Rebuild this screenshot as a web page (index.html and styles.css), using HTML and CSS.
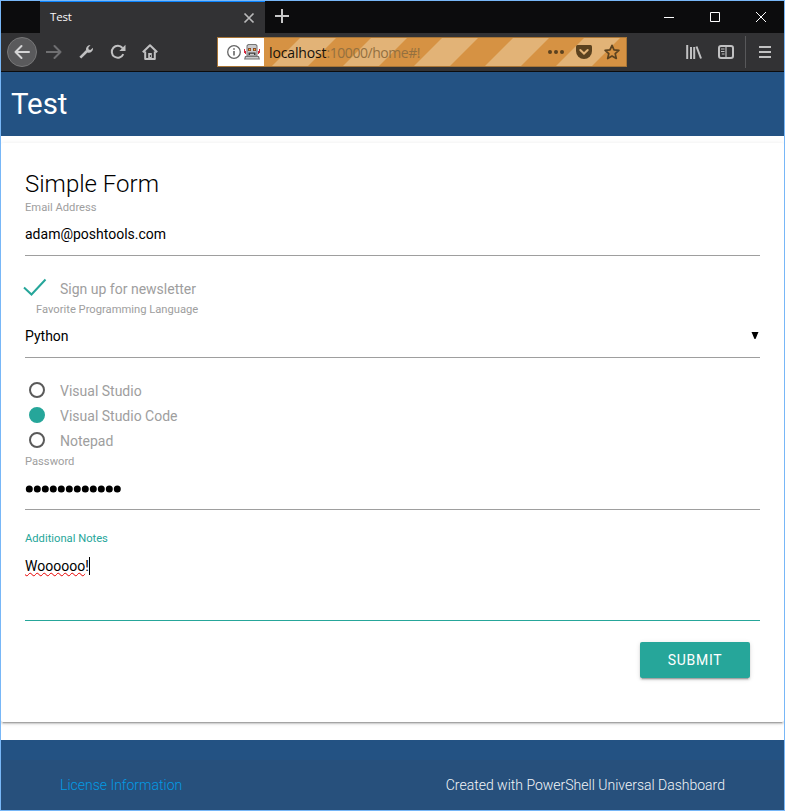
FILE: index.html
```html
<!DOCTYPE html>
<html lang="en">
<head>
<meta charset="utf-8">
<title>Test</title>
<link rel="stylesheet" href="styles.css">
</head>
<body>
<div class="window">
  <div class="tabbar">
    <div class="tab">
      <span class="tab-title">Test</span>
      <svg class="tab-close" width="12" height="12" viewBox="0 0 12 12"><path d="M1.5 1.5l9 9M10.5 1.5l-9 9"/></svg>
    </div>
    <svg class="tab-new" width="14" height="14" viewBox="0 0 14 14"><path d="M7 0v14M0 7h14"/></svg>
    <div class="controls">
      <svg width="10" height="11" viewBox="0 0 10 11"><path d="M0 5.5h10"/></svg>
      <svg width="10" height="10" viewBox="0 0 10 10"><path d="M.5.5h9v9h-9z"/></svg>
      <svg width="10" height="10" viewBox="0 0 10 10"><path d="M0 0l10 10M10 0L0 10"/></svg>
    </div>
  </div>
  <div class="toolbar">
    <div class="back"><svg width="16" height="16" viewBox="0 0 16 16"><path d="M15 8H1.5M7.5 2l-6 6 6 6"/></svg></div>
    <svg class="tool forward" width="16" height="16" viewBox="0 0 16 16"><path d="M0 8h14.5M8.500 2l6 6-6 6"/></svg>
    <svg class="tool" width="16" height="16" viewBox="0 0 16 16"><path d="M2.300 13.700L9 7" stroke-width="2.600"/><path class="solid" d="M12.500 1a4.400 4.400 0 0 0-4.200 6.200l1.600 1.500A4.300 4.300 0 0 0 15 3.800l-2.600 2.100-1.700-.3-.4-1.900z"/></svg>
    <svg class="tool" width="16" height="16" viewBox="0 0 16 16"><path d="M13.300 10.200A6 6 0 1 1 12.500 4" /><path class="solid" d="M15.500 .8v6.200H9.300z"/></svg>
    <svg class="tool" width="16" height="16" viewBox="0 0 16 16"><path d="M.8 8.300L8 1.200l7.200 7.100M3.200 7.500V15h9.600V7.500"/><path class="solid" d="M6.200 9h3.600v6H6.200z"/><path d="M8.400 11v2" stroke="#323234" stroke-width="1"/></svg>
    <div class="urlbar">
      <div class="identity">
        <svg width="14" height="14" viewBox="0 0 14 14" fill="none" stroke="#656565"><circle cx="7" cy="7" r="6.300" stroke-width="1.300"/><path d="M7 6v4.500M7 3.200v1.600" stroke-width="1.600"/></svg>
        <svg width="16" height="16" viewBox="0 0 16 16"><path fill="#d7263d" d="M0 5h1v2h1v3H1V9H0zM16 5h-1v2h-1v3h1V9h1z"/><path fill="#777" d="M4 0h8l1.500 1.500V12H15l1 3.500H0L1 12h1.500V1.500z"/><path fill="#c9cacc" d="M4.500 1h7l1 1.200V11.500h-9V2.200zM2 13h12l.5 1.500h-13z"/><path fill="#8a4a2a" d="M4 4h3v3H4zM9 4h3v3H9z"/><path fill="#ffb52e" d="M5 5h1.200v1.200H5zM10 5h1.200v1.200H10z"/><path fill="#3c3c3c" d="M4.500 8.500h7V11H10V9.700H6V11H4.500z"/></svg>
      </div>
      <div class="address">
        <svg class="stripes" width="363" height="28" viewBox="0 0 363 28"><path d="M8 28L36 0h36L44 28zM79 28L107 0h36L115 28zM150 28L178 0h36L186 28zM221 28L249 0h36L257 28zM292 28L320 0h36L328 28z"/></svg>
        <span class="url"><span class="host">localhost</span>:10000/home#!</span>
        <div class="actions">
          <svg width="16" height="16" viewBox="0 0 16 16"><circle cx="2" cy="8" r="2"/><circle cx="8" cy="8" r="2"/><circle cx="14" cy="8" r="2"/></svg>
          <svg width="16" height="16" viewBox="0 0 16 16"><path d="M1.500 1h13Q16 1 16 2.500V7A8 8 0 0 1 0 7V2.500Q0 1 1.500 1z"/><path d="M4.300 6L8 9.500 11.700 6" fill="none" stroke="#e2b377" stroke-width="2" stroke-linecap="round"/></svg>
          <svg width="16" height="16" viewBox="0 0 16 16"><path d="M8 1.300l2 4.500 4.900.5-3.700 3.300 1.100 4.900L8 12l-4.300 2.500 1.100-4.900L1.100 6.300 6 5.800z" fill="none" stroke="#5b421f" stroke-width="1.700" stroke-linejoin="round"/></svg>
        </div>
      </div>
    </div>
    <div class="tools-right">
      <svg class="tool" width="16" height="16" viewBox="0 0 16 16"><path d="M1.200 1v14M5 3v12M8.200 3v12M10.500 2.500L15 14.500"/></svg>
      <svg class="tool" width="16" height="16" viewBox="0 0 16 16"><rect x="1" y="2" width="14" height="12" rx="2"/><path d="M8 2v12M3 5h3.500M3 7.500h3.500M3.800 10h2.700" stroke-width="1.200"/></svg>
      <i class="divider"></i>
      <svg class="tool" width="12" height="12" viewBox="0 0 12 12"><path d="M0 1h12M0 6h12M0 11h12"/></svg>
    </div>
  </div>
  <header class="page-header">Test</header>
  <main class="page">
    <form class="card">
      <h1 class="card-title">Simple Form</h1>
      <label class="label">Email Address</label>
      <div class="field">adam@poshtools.com</div>
      <div class="option">
        <svg class="check" width="24" height="20" viewBox="0 0 24 20"><path d="M1 9.500L8.500 16.500 22.500 1.500"/></svg>
        <span>Sign up for newsletter</span>
      </div>
      <label class="label label-select">Favorite Programming Language</label>
      <div class="field select"><span>Python</span><svg width="8" height="8" viewBox="0 0 8 8"><path d="M.5 0h7L4.500 7h-1z"/></svg></div>
      <div class="option"><i class="radio"></i><span>Visual Studio</span></div>
      <div class="option stacked"><i class="radio selected"></i><span>Visual Studio Code</span></div>
      <div class="option stacked"><i class="radio"></i><span>Notepad</span></div>
      <label class="label label-password">Password</label>
      <div class="field password"><svg width="98" height="8" viewBox="0 0 98 8"><path class="dots" d="M4.300 4h88.100"/></svg></div>
      <label class="label label-active">Additional Notes</label>
      <div class="field notes"><span class="misspelled">Woooooo</span>!<i class="caret"></i></div>
      <div class="buttons"><div class="submit">SUBMIT</div></div>
    </form>
  </main>
  <footer class="page-footer">
    <div class="copyright"><a class="license">License Information</a><span>Created with PowerShell Universal Dashboard</span></div>
  </footer>
</div>
</body>
</html>
```
FILE: styles.css
```css
* { box-sizing: border-box; }
body { margin: 0; font-family: Roboto, sans-serif; font-size: 14px; color: #000; }
svg { display: block; flex: none; }
.window { width: 785px; height: 811px; border: 1px solid #78b7f7; display: flex; flex-direction: column; overflow: hidden; background: #fff; }

.tabbar { height: 32px; flex: none; background: #0c0c0d; display: flex; align-items: center; }
.tab { width: 225px; height: 32px; margin-left: 39px; padding: 0 10px; background: #323234; border-top: 1px solid #0a84ff; display: flex; align-items: center; justify-content: space-between; color: #f9f9fa; font: 11.5px "Open Sans", sans-serif; letter-spacing: -.2px; }
.tab-title { margin-top: -2px; }
.tab-close { fill: none; stroke: #b9b9ba; stroke-width: 1.7; }
.tab-new { margin-left: 10px; margin-bottom: 2px; fill: none; stroke: #c8c8c8; stroke-width: 2; }
.controls { display: flex; gap: 36px; align-items: center; margin-left: auto; margin-right: 18px; fill: none; stroke: #fff; stroke-width: 1; }

.toolbar { height: 39px; flex: none; background: #323234; border-bottom: 1px solid #0c0c0d; display: flex; align-items: center; padding-left: 6px; }
.back { width: 30px; height: 30px; border-radius: 50%; border: 1px solid #777778; background: #5a5a5c; display: flex; align-items: center; justify-content: center; margin-right: 9px; }
.back svg { fill: none; stroke: #d5d5d6; stroke-width: 2; stroke-linecap: round; stroke-linejoin: round; }
.tool { fill: none; stroke: #c1c1c2; stroke-width: 2; margin-right: 16px; stroke-linejoin: round; }
.tool .solid { fill: #c1c1c2; stroke: none; }
.forward { stroke: #6f6f71; stroke-linecap: round; }
.urlbar { width: 410px; height: 30px; margin-left: 43px; border: 1px solid #a87536; display: flex; background: #d69243; }
.identity { width: 46px; background: #fff; display: flex; align-items: center; gap: 3px; padding-left: 9px; }
.address { flex: 1; position: relative; display: flex; align-items: center; overflow: hidden; }
.stripes { position: absolute; left: 0; top: 0; fill: #e2b377; }
.url { position: relative; padding-left: 5px; font: 14px "Open Sans", sans-serif; color: #94703f; letter-spacing: -.45px; }
.host { color: #17120b; letter-spacing: -.13px; }
.actions { position: relative; display: flex; gap: 12px; margin-left: auto; margin-right: 6px; fill: #5b421f; }
.tools-right { display: flex; align-items: center; height: 38px; margin-left: auto; padding-right: 13px; }
.tools-right .tool:last-child { margin-right: 0; }
.divider { width: 1px; height: 32px; background: #58585a; margin: 0 13px 0 -5px; }

.page-header { height: 64px; flex: none; background: #235283; color: #fff; font-size: 29.4px; line-height: 64px; padding-left: 10px; }
.page { height: 604px; flex: none; padding-top: 7px; }
.card { height: 579px; padding: 24px; border-radius: 2px; display: flex; flex-direction: column; box-shadow: 0 2px 2px 0 rgba(0,0,0,.14), 0 1px 5px 0 rgba(0,0,0,.12), 0 3px 1px -2px rgba(0,0,0,.2); }
.card-title { margin: 0; height: 33px; font-size: 24px; font-weight: 300; line-height: 35px; }
.label { height: 14px; font-size: 11.2px; line-height: 16px; color: #9e9e9e; }
.field { height: 42px; display: flex; align-items: center; padding-bottom: 1px; border-bottom: 1px solid #9e9e9e; }
.option { height: 25px; margin-top: 20px; padding-left: 35px; line-height: 27px; color: #9e9e9e; position: relative; }
.option.stacked { margin-top: 0; }
.check { position: absolute; left: -2px; top: 2px; fill: none; stroke: #26a69a; stroke-width: 2; }
.label-select { margin: 1px 0 0 11px; }
.select { justify-content: space-between; }
.select svg { margin-right: 1px; }
.radio { position: absolute; left: 4px; top: 4px; width: 16px; height: 16px; border: 2px solid #5a5a5a; border-radius: 50%; }
.radio.selected { border-color: #26a69a; background: #26a69a; }
.label-password { margin-top: 1px; }
.password { padding: 1px 0 0; }
.dots { stroke: #000; stroke-width: 7; stroke-linecap: round; stroke-dasharray: 0 8; }
.label-active { margin-top: 21px; color: #26a69a; }
.notes { height: 76px; border-color: #26a69a; align-items: flex-start; padding-top: 12px; line-height: 19px; }
.misspelled { text-decoration: underline wavy #e80000 1px; text-underline-offset: 1px; text-decoration-skip-ink: none; }
.caret { width: 1px; height: 18px; background: #000; }
.buttons { display: flex; justify-content: flex-end; padding: 21px 10px 0 0; }
.submit { width: 110px; height: 36px; border-radius: 2px; background: #26a69a; color: #fff; line-height: 37px; text-align: center; letter-spacing: .7px; box-shadow: 0 2px 2px 0 rgba(0,0,0,.14), 0 1px 5px 0 rgba(0,0,0,.12), 0 3px 1px -2px rgba(0,0,0,.2); }

.page-footer { height: 70px; flex: none; padding-top: 20px; background: #235283; }
.copyright { height: 50px; padding: 0 59px; background: #27507c; display: flex; justify-content: space-between; align-items: center; font-weight: 300; color: #f2f5f8; }
.license { color: #039be5; }
```
